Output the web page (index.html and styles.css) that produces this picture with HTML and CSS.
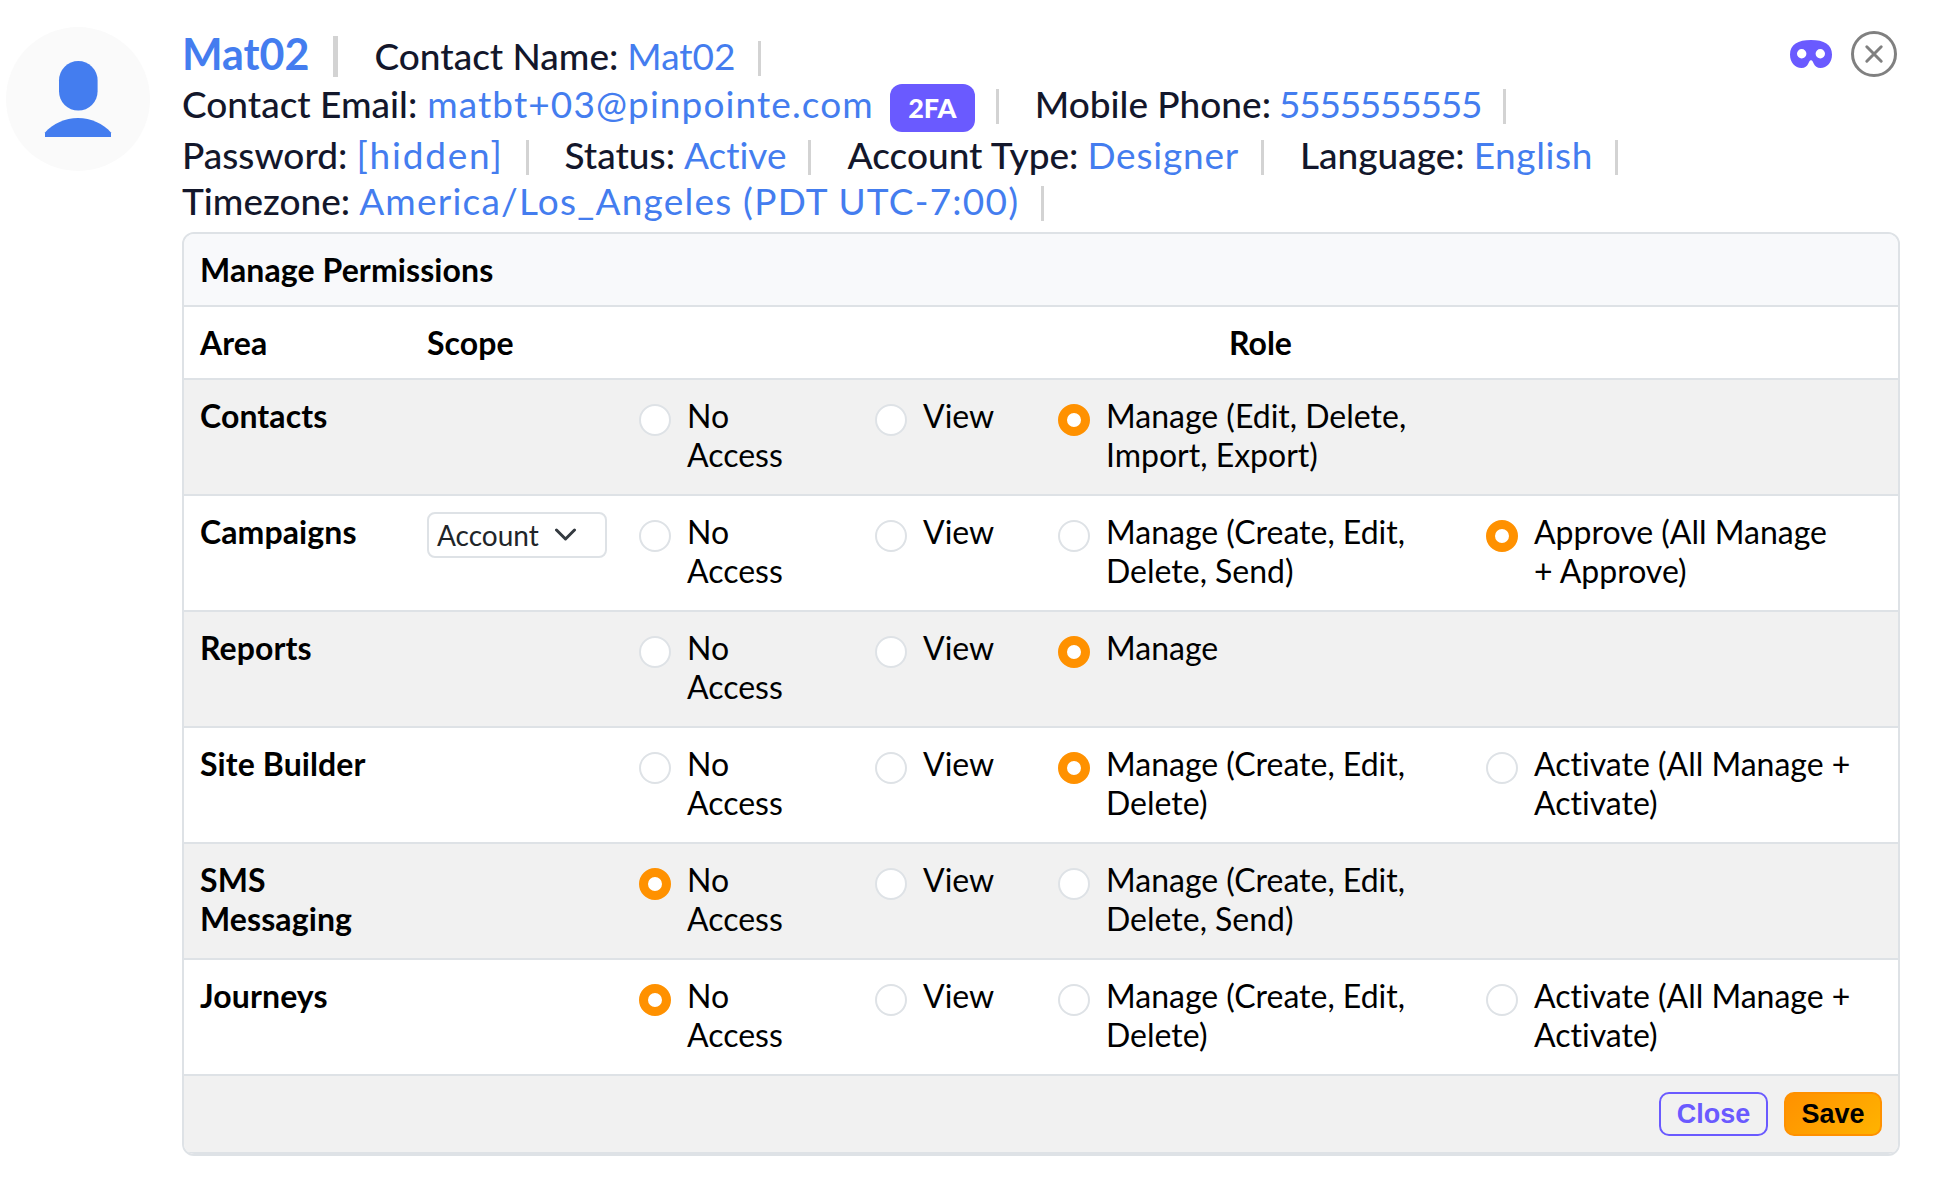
FILE: index.html
```
<!DOCTYPE html>
<html lang="en">
<head>
    <meta charset="UTF-8">
    <meta name="viewport" content="width=device-width, initial-scale=1.0">
    <title>Mat02 - Manage Permissions</title>
    <link rel="stylesheet" href="styles.css">
</head>
<body>
    <div class="user">
        <div class="avatar">
            <svg width="144" height="144" viewBox="0 0 144 144">
                <rect x="53" y="34" width="38.6" height="49.6" rx="19.3" fill="#447def"/>
                <path d="M39 110V105.500C47 96.500 59 91 72 91S97 96.500 105 105.500V110Z" fill="#447def"/>
            </svg>
        </div>

        <div class="details">
            <div class="top">
                <div class="info">
                    <div class="line line-1">
                        <span class="name">Mat02</span><span class="sep sep-lg"></span>
                        <span class="label">Contact Name:</span><span class="value">Mat02</span><span class="sep"></span>
                    </div>
                    <div class="line line-2">
                        <span class="label">Contact Email:</span><span class="value v-email">matbt+03@pinpointe.com</span><span class="badge">2FA</span><span class="sep"></span>
                        <span class="label">Mobile Phone:</span><span class="value v-phone">5555555555</span><span class="sep"></span>
                    </div>
                    <div class="line line-3">
                        <span class="label">Password:</span><span class="value v-pass">[hidden]</span><span class="sep"></span>
                        <span class="label">Status:</span><span class="value">Active</span><span class="sep"></span>
                        <span class="label">Account Type:</span><span class="value v-type">Designer</span><span class="sep"></span>
                        <span class="label">Language:</span><span class="value v-lang">English</span><span class="sep"></span>
                    </div>
                    <div class="line line-4">
                        <span class="label">Timezone:</span><span class="value v-zone">America/Los_Angeles (PDT UTC-7:00)</span><span class="sep"></span>
                    </div>
                </div>
                <div class="actions">
                    <svg width="42" height="28" viewBox="0 0 42 28">
                        <path fill="#6a5aff" fill-rule="evenodd" d="M21 0C34 0 42 4.500 42 14.500C42 22.500 37 28 30.500 28C27 28 25 26.500 23.800 23.800L22.700 21.400C22 19.900 20 19.900 19.300 21.400L18.200 23.800C17 26.500 15 28 11.500 28C5 28 0 22.500 0 14.500C0 4.500 8 0 21 0ZM11.700 9A4.700 4.700 0 1 0 11.700 18.400A4.700 4.700 0 1 0 11.700 9ZM30.300 9A4.700 4.700 0 1 0 30.300 18.400A4.700 4.700 0 1 0 30.300 9Z"/>
                    </svg>
                    <svg width="46" height="46" viewBox="0 0 46 46" fill="none" stroke="#808080" stroke-width="3" stroke-linecap="round">
                        <circle cx="23" cy="23" r="21.500"/>
                        <path d="M15.800 15.800L30.200 30.200M30.200 15.800L15.800 30.200"/>
                    </svg>
                </div>
            </div>

            <div class="panel">
                <div class="panel-title">Manage Permissions</div>
                <div class="row head">
                    <div class="area">Area</div>
                    <div class="area">Scope</div>
                    <div class="role">Role</div>
                </div>
                <div class="row gray">
                    <div class="area">Contacts</div>
                    <div></div>
                    <label class="opt"><span class="radio"></span><span>No<br>Access</span></label>
                    <label class="opt"><span class="radio"></span><span>View</span></label>
                    <label class="opt"><span class="radio on"></span><span>Manage (Edit, Delete,<br>Import, Export)</span></label>
                </div>
                <div class="row">
                    <div class="area">Campaigns</div>
                    <div class="scope">
                        <div class="select">Account
                            <svg width="22" height="14" viewBox="0 0 22 14" fill="none" stroke="#343a40" stroke-width="3" stroke-linecap="round" stroke-linejoin="round"><path d="M1.500 2L10.500 11L19.500 2"/></svg>
                        </div>
                    </div>
                    <label class="opt"><span class="radio"></span><span>No<br>Access</span></label>
                    <label class="opt"><span class="radio"></span><span>View</span></label>
                    <label class="opt"><span class="radio"></span><span>Manage (Create, Edit,<br>Delete, Send)</span></label>
                    <label class="opt"><span class="radio on"></span><span>Approve (All Manage<br>+ Approve)</span></label>
                </div>
                <div class="row gray">
                    <div class="area">Reports</div>
                    <div></div>
                    <label class="opt"><span class="radio"></span><span>No<br>Access</span></label>
                    <label class="opt"><span class="radio"></span><span>View</span></label>
                    <label class="opt"><span class="radio on"></span><span>Manage</span></label>
                </div>
                <div class="row">
                    <div class="area">Site Builder</div>
                    <div></div>
                    <label class="opt"><span class="radio"></span><span>No<br>Access</span></label>
                    <label class="opt"><span class="radio"></span><span>View</span></label>
                    <label class="opt"><span class="radio on"></span><span>Manage (Create, Edit,<br>Delete)</span></label>
                    <label class="opt"><span class="radio"></span><span>Activate (All Manage +<br>Activate)</span></label>
                </div>
                <div class="row gray">
                    <div class="area">SMS<br>Messaging</div>
                    <div></div>
                    <label class="opt"><span class="radio on"></span><span>No<br>Access</span></label>
                    <label class="opt"><span class="radio"></span><span>View</span></label>
                    <label class="opt"><span class="radio"></span><span>Manage (Create, Edit,<br>Delete, Send)</span></label>
                </div>
                <div class="row">
                    <div class="area">Journeys</div>
                    <div></div>
                    <label class="opt"><span class="radio on"></span><span>No<br>Access</span></label>
                    <label class="opt"><span class="radio"></span><span>View</span></label>
                    <label class="opt"><span class="radio"></span><span>Manage (Create, Edit,<br>Delete)</span></label>
                    <label class="opt"><span class="radio"></span><span>Activate (All Manage +<br>Activate)</span></label>
                </div>
                <div class="panel-footer">
                    <button class="btn btn-close">Close</button>
                    <button class="btn btn-save">Save</button>
                </div>
            </div>
        </div>
    </div>
</body>
</html>
```
FILE: styles.css
```
* {
    margin: 0;
    padding: 0;
    box-sizing: border-box;
}

body {
    font-family: Lato, sans-serif;
    font-size: 32px;
    font-variant-ligatures: none;
    line-height: 39px;
    color: #000;
    background: #fff;
}

.user {
    display: flex;
    padding: 27px 60px 0 6px;
}

.avatar {
    width: 144px;
    height: 144px;
    margin-right: 32px;
    border-radius: 50%;
    background: #fafafa;
    flex-shrink: 0;
}

.avatar svg {
    display: block;
}

.details {
    flex: 1;
}

.top {
    display: flex;
    justify-content: space-between;
    height: 205px;
}

/* contact info */
.info {
    padding-top: 5px;
}

.line {
    display: flex;
    align-items: baseline;
    font-size: 37px;
    line-height: 44px;
    white-space: nowrap;
}

.line-1 {
    height: 50px;
}

.line-2 {
    height: 51px;
}

.line-3 {
    height: 46px;
}

.name {
    font-size: 43px;
    font-weight: 700;
    color: #447def;
}

.label {
    font-weight: 500;
    color: #13172b;
}

.value {
    margin-left: 9px;
    color: #447def;
}

.v-email {
    margin-left: 10px;
    letter-spacing: 1.1px;
}

.v-phone {
    margin-left: 8px;
    letter-spacing: -1.25px;
}

.v-pass {
    letter-spacing: 1.8px;
}

.v-type {
    letter-spacing: 0.8px;
}

.v-lang {
    letter-spacing: 0.6px;
}

.v-zone {
    letter-spacing: 1.22px;
}

.sep {
    align-self: flex-start;
    width: 3px;
    height: 35px;
    margin: 7px 36px 0 22px;
    background: #d3d3d3;
}

.line-1 .sep {
    margin-top: 9px;
}

.line-1 .sep-lg {
    width: 5px;
    height: 41px;
    margin-top: 4px;
    margin-left: 24px;
}

.badge {
    width: 85px;
    height: 48px;
    margin-left: 16px;
    border-radius: 12px;
    background: #6a5aff;
    color: #fff;
    font-size: 27px;
    font-weight: 900;
    line-height: 48px;
    text-align: center;
}

.badge + .sep {
    margin-left: 21px;
}

.actions {
    display: flex;
    align-items: center;
    gap: 19px;
    height: 46px;
    margin-top: 4px;
    margin-right: 3px;
}

/* permissions */
.panel {
    border: 2px solid #dee2e6;
    border-radius: 12px;
    overflow: hidden;
}

.panel-title {
    height: 71px;
    padding: 16px;
    background: #f8f9fb;
    font-weight: 700;
    letter-spacing: 0.1px;
}

.row {
    display: grid;
    grid-template-columns: 227px 212px 236px 183px 428px 1fr;
    height: 116px;
    border-top: 2px solid #dee2e6;
}

.row > div,
.opt {
    padding: 16px;
}

.row.head {
    height: 73px;
}

.gray,
.panel-footer {
    background: #f1f1f1;
}

.area {
    font-weight: 700;
    letter-spacing: 0.1px;
}

.role {
    grid-column: 3 / 7;
    font-weight: 700;
    text-align: center;
}

.opt {
    display: flex;
    gap: 16px;
}

.radio {
    width: 32px;
    height: 32px;
    margin-top: 8px;
    border: 2px solid #dee2e6;
    border-radius: 50%;
    background: #fff;
    flex-shrink: 0;
}

.radio.on {
    border: 9px solid #ff9100;
}

.select {
    display: flex;
    align-items: center;
    gap: 16px;
    width: 180px;
    height: 46px;
    padding: 0 8px;
    border: 2px solid #dee2e6;
    border-radius: 8px;
    background: #fff;
    color: #212529;
    font-size: 28px;
}

.panel-footer {
    display: flex;
    justify-content: flex-end;
    gap: 16px;
    padding: 16px;
    border-top: 2px solid #dee2e6;
    border-bottom: 2px solid #dee2e6;
}

.btn {
    height: 44px;
    border-radius: 10px;
    font-family: "Liberation Sans", Arial, sans-serif;
    font-size: 27px;
    font-weight: 700;
    line-height: 38px;
}

.btn-close {
    width: 109px;
    border: 2px solid #6a5aff;
    background: transparent;
    color: #6a5aff;
}

.btn-save {
    width: 98px;
    border: 2px solid #ff9100;
    background: linear-gradient(135deg, #ff9100, #ffb300);
    color: #000;
}
```
